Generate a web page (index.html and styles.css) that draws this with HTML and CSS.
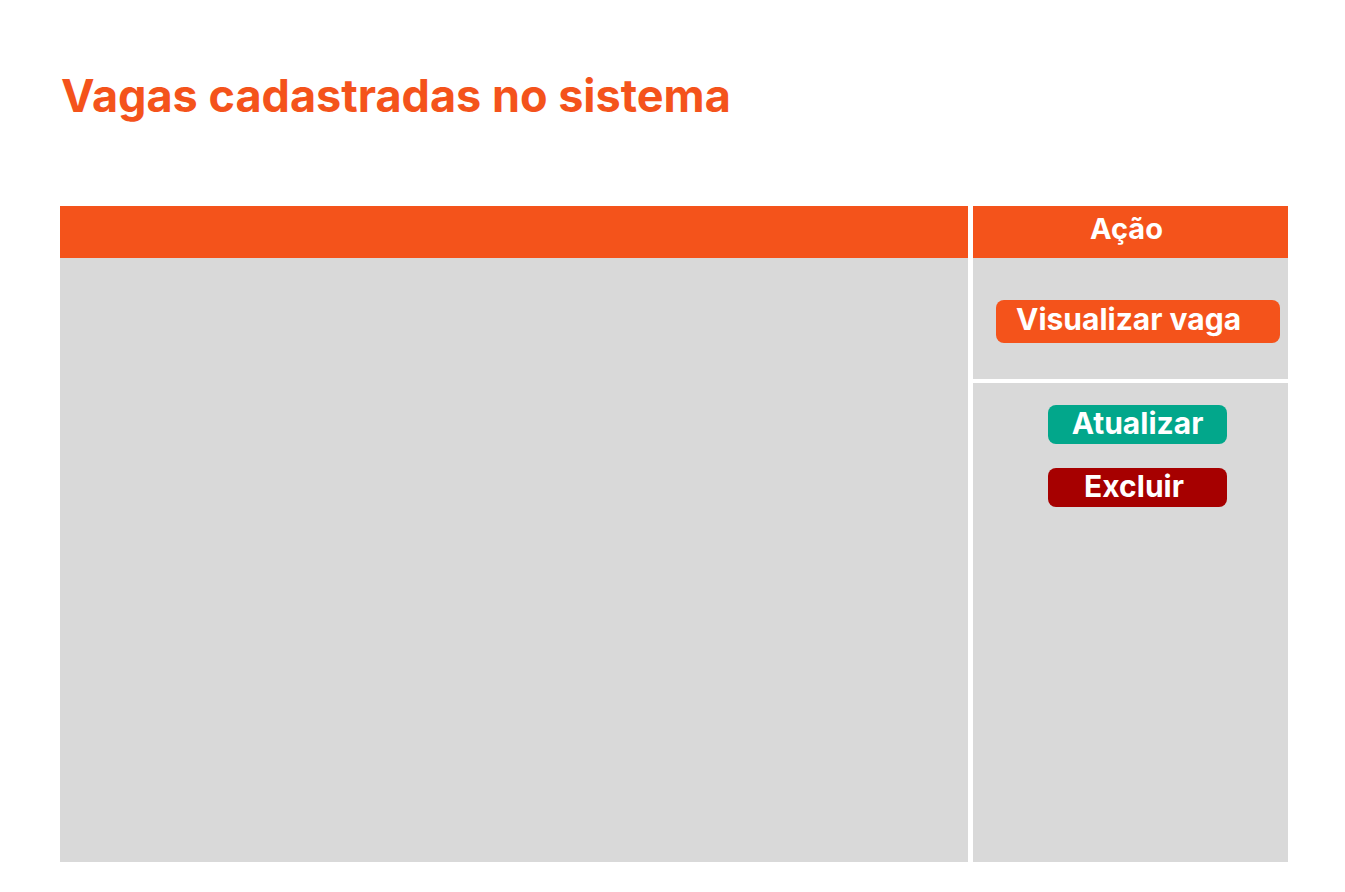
FILE: index.html
```html
<!DOCTYPE html>
<html lang="pt-BR">
<head>
<meta charset="utf-8">
<title>Vagas cadastradas</title>
<link rel="stylesheet" href="styles.css">
</head>
<body>
<main class="page">
  <h1 class="title">Vagas cadastradas no sistema</h1>
  <div class="table">
    <div class="col-main">
      <div class="th"></div>
      <div class="td-main"></div>
    </div>
    <div class="col-action">
      <div class="th">Ação</div>
      <div class="cell cell-view">
        <button class="btn btn-view">Visualizar vaga</button>
      </div>
      <div class="cell cell-edit">
        <button class="btn btn-update">Atualizar</button>
        <button class="btn btn-delete">Excluir</button>
      </div>
    </div>
  </div>
</main>
</body>
</html>
```

FILE: styles.css
```css
* { box-sizing: border-box; }
html, body { margin: 0; padding: 0; background: #ffffff; }
body { font-family: Inter, "Noto Sans", sans-serif; }

.page {
  padding: 70px 57px 0 60px;
}

.title {
  margin: 0 0 84px 1px;
  font-size: 45px;
  line-height: 52px;
  font-weight: 700;
  color: #F4531B;
  letter-spacing: 0;
}

.table {
  display: grid;
  grid-template-columns: 908px 315px;
  column-gap: 5px;
  height: 656px;
}

.col-main, .col-action {
  display: flex;
  flex-direction: column;
}

.th {
  height: 52px;
  background: #F4531B;
  color: #ffffff;
  font-weight: 700;
  font-size: 29px;
  display: flex;
  align-items: center;
  justify-content: center;
  padding-bottom: 8px;
}

.col-action .th { padding-right: 8px; }

.td-main {
  flex: 1;
  background: #D9D9D9;
}

.cell { background: #D9D9D9; }

.cell-view {
  height: 121px;
  padding: 42px 8px 0 23px;
}

.cell-edit {
  flex: 1;
  margin-top: 4px;
  padding: 22px 0 0 75px;
  display: flex;
  flex-direction: column;
  gap: 24px;
}

.btn {
  border: none;
  margin: 0;
  color: #ffffff;
  font-family: Inter, "Noto Sans", sans-serif;
  font-weight: 700;
  border-radius: 8px;
  cursor: pointer;
  display: block;
}

.btn-view {
  width: 284px;
  height: 43px;
  background: #F4531B;
  font-size: 30px;
  text-align: left;
  padding: 0 0 6px 20px;
}

.btn-update, .btn-delete {
  width: 179px;
  height: 39px;
  font-size: 30px;
  padding: 0 0 3px 0;
  text-align: center;
}

.btn-delete { padding-right: 7px; }

.btn-update { background: #02A78B; }
.btn-delete { background: #A60000; }
```
